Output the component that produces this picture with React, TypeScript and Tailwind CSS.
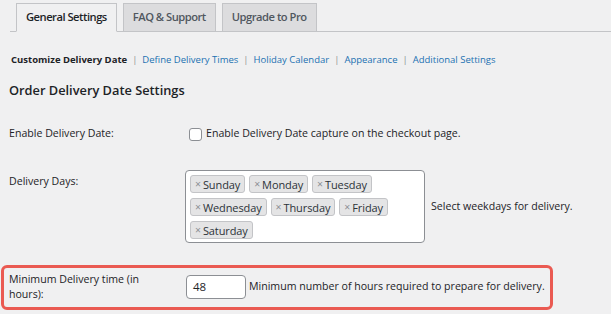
import React from "react";

const DAYS = [["Sunday", "Monday", "Tuesday"], ["Wednesday", "Thursday", "Friday"], ["Saturday"]];
const LINKS = ["Define Delivery Times", "Holiday Calendar", "Appearance", "Additional Settings"];

function Tag({ label }: { label: string }) {
  return (
    <span className="inline-flex items-center h-[18px] px-[4px] rounded-[3px] border border-[#c3c4c7] bg-[#e4e4e5] text-[11px] tracking-[-0.1px] text-[#2c3338] leading-none">
      <span className="text-[#8c8f94] text-[10.5px] mr-[2px]">×</span>
      {label}
    </span>
  );
}

export default function App() {
  return (
    <div className="min-h-screen bg-[#f0f0f1] text-[#1d2327] font-['Open_Sans',sans-serif] text-[10.6px]">
      {/* Tabs */}
      <div className="ml-[10px] pt-[3px] pl-[6px] flex gap-[6px] border-b border-[#c3c4c7]">
        {["General Settings", "FAQ & Support", "Upgrade to Pro"].map((t, i) => (
          <div
            key={t}
            className={`h-[29px] -mb-px px-[9px] flex items-center border text-[11.2px] tracking-[-0.5px] font-semibold ${
              i === 0 ? "bg-[#f0f0f1] border-[#c3c4c7] border-b-[#f0f0f1] text-[#1d2327]" : "bg-[#dcdcde] border-[#c3c4c7] text-[#50575e]"
            }`}
          >
            {t}
          </div>
        ))}
      </div>

      {/* Sub nav */}
      <div className="mt-[20px] pl-[11px] h-[16px] flex items-center text-[9.5px]">
        <span className="font-bold text-[#1d2327]">Customize Delivery Date</span>
        {LINKS.map((l) => (
          <React.Fragment key={l}>
            <span className="mx-[5px] text-[#8c8f94]">|</span>
            <span className="text-[#2271b1]">{l}</span>
          </React.Fragment>
        ))}
      </div>

      <h2 className="mt-[13px] pl-[9px] h-[20px] flex items-center text-[12.8px] font-semibold text-[#1d2327]">Order Delivery Date Settings</h2>

      {/* Enable */}
      <div className="mt-[25px] pl-[9px] flex items-center h-[16px]">
        <div className="w-[177px]">Enable Delivery Date:</div>
        <span className="ml-[3px] w-[13px] h-[13px] rounded-[3px] border border-[#8c8f94] bg-white" />
        <span className="ml-[4px]">Enable Delivery Date capture on the checkout page.</span>
      </div>

      {/* Delivery days */}
      <div className="mt-[28px] pl-[9px] flex items-start">
        <div className="w-[176px] pt-[3px] leading-[16px]">Delivery Days:</div>
        <div className="w-[240px] h-[73px] rounded-[4px] border border-[#8c8f94] bg-white pl-[4px] pt-[4px] flex flex-col gap-[5px]">
          {DAYS.map((row, r) => (
            <div key={r} className="flex gap-[4px]">
              {row.map((d) => (
                <Tag key={d} label={d} />
              ))}
            </div>
          ))}
        </div>
        <div className="self-center ml-[6px]">Select weekdays for delivery.</div>
      </div>

      {/* Highlighted row */}
      <div className="mt-[22px] ml-[1px] w-[552px] border-[3px] border-[#ea5a52] rounded-[6px] pl-[5px] pt-[4px] pb-[5px] flex items-center">
        <div className="w-[177px] pr-[27px] leading-[15px]">Minimum Delivery time (in hours):</div>
        <div className="w-[60px] h-[24px] rounded-[4px] border border-[#8c8f94] bg-white flex items-center pl-[6px] text-[11.5px]">48</div>
        <span className="ml-[3px]">Minimum number of hours required to prepare for delivery.</span>
      </div>
    </div>
  );
}
